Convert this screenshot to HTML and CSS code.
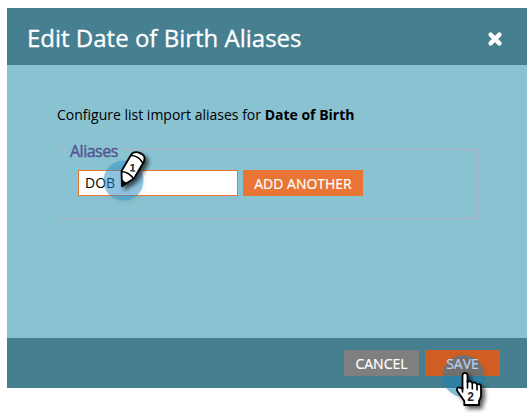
FILE: index.html
```html
<!DOCTYPE html>
<html lang="en">
<head>
<meta charset="utf-8">
<title>Edit Date of Birth Aliases</title>
<link rel="stylesheet" href="styles.css">
</head>
<body>
<div class="dialog">
  <header class="header">
    <h1 class="title">Edit Date of Birth Aliases</h1>
    <svg class="close" width="16" height="16" viewBox="0 0 16 16"><path d="M3.6 3.6L12.4 12.4M12.4 3.6L3.6 12.4"/></svg>
  </header>
  <main class="content">
    <p class="intro">Configure list import aliases for <b>Date of Birth</b></p>
    <fieldset class="group">
      <legend class="legend"><span>Aliases</span></legend>
      <div class="row">
        <div class="field"><span>DOB</span></div>
        <button class="btn add"><span>ADD ANOTHER</span></button>
      </div>
    </fieldset>
  </main>
  <footer class="footer">
    <button class="btn cancel"><span>CANCEL</span></button>
    <button class="btn save"><span>SAVE</span></button>
  </footer>
  <svg class="marker marker-edit" width="60" height="70" viewBox="100 140 60 70">
    <circle class="halo" cx="123.500" cy="180.500" r="20"/>
    <g class="tool">
      <path class="shape" d="M121.500 171L131 155Q133 151.500 138 152.300Q144 154 144.600 158L144 161.500L134 178.500L122 186Z"/>
      <path class="line" d="M131.500 155.500Q139 156 142.800 163M121.800 171.500Q128.500 172 133.500 178.500"/>
      <path class="tip" d="M122 180L126.500 183.500L122 187Z"/>
    </g>
    <text class="digit" x="132.500" y="171.500" transform="rotate(4 132.500 168)">1</text>
  </svg>
  <svg class="marker marker-click" width="70" height="66" viewBox="436 350 70 66">
    <circle class="halo halo-click" cx="463.500" cy="376" r="21"/>
    <g class="tool">
      <path class="shape" d="M462.500 389V375.500Q462.500 372.800 464.900 372.800Q467.500 372.800 467.500 375.500V382.300Q470.500 380.300 472.300 383Q475.500 381.300 477 384.500Q481 383 481 387V396Q480.500 398.500 479 401V405H464.300V401L457 390.500Q456.500 387 459.800 387.500Z"/>
      <path class="line" d="M467.500 381V388M472.300 383V389M477 384.500V390M462.500 387V392"/>
    </g>
    <text class="digit digit-two" x="470.700" y="400.600">2</text>
  </svg>
</div>
</body>
</html>
```
FILE: styles.css
```css
* { box-sizing: border-box; }
body {
  margin: 0;
  padding: 8px 4px 0 7px;
  background: #fff;
  color: #000;
  font-family: "Open Sans", "Noto Sans", sans-serif;
}
.dialog {
  display: flex;
  flex-direction: column;
  width: 520px;
  height: 380px;
  background: #89c2d0;
}
.header {
  display: flex;
  align-items: center;
  justify-content: space-between;
  height: 57px;
  padding: 0 24px 0 20px;
  background: #467f90;
}
.title {
  margin: 0;
  padding-top: 2px;
  color: #fff;
  font-size: 24px;
  font-weight: 400;
  line-height: 34px;
  white-space: nowrap;
  -webkit-text-stroke: 0.3px #fff;
}
.close { margin-top: 5px; }
.close path { fill: none; stroke: #fff; stroke-width: 4.4; stroke-linecap: round; }
.content { flex: 1; padding: 40px 50px 0; }
.intro {
  margin: 0 0 16px;
  font-size: 14px;
  line-height: 20px;
  white-space: nowrap;
}
.group {
  width: 420px;
  height: 78px;
  margin: 0;
  padding: 0 20px;
  border: 1px solid #b4b1c6;
}
.legend {
  height: 16px;
  margin-left: -10px;
  padding: 0 4px 0 2px;
  color: #555390;
  font-size: 16px;
  letter-spacing: -0.5px;
  line-height: 20px;
  -webkit-text-stroke: 0.4px #555390;
}
.row { display: flex; gap: 5px; padding-top: 13px; }
.field {
  width: 160px;
  height: 26px;
  padding: 0 6px;
  border: 1px solid #e97735;
  background: #fff;
  font-size: 14px;
  line-height: 24px;
}
.btn {
  height: 26px;
  margin: 0;
  padding: 0;
  border: 0;
  color: #fff;
  font: 14px/26px "Open Sans", "Noto Sans", sans-serif;
  white-space: nowrap;
  -webkit-text-stroke: 0.2px #fff;
}
.btn span { position: relative; top: 1px; }
.add { width: 120px; background: #e87534; }
.footer {
  display: flex;
  justify-content: flex-end;
  gap: 6px;
  height: 50px;
  padding: 12px 27px 0 0;
  background: #467f90;
}
.cancel { width: 75px; background: #7f7f7f; }
.save { width: 75px; background: #d05d22; color: #b8d2ee; -webkit-text-stroke-color: #b8d2ee; }
.save span { z-index: 2; }
.marker { position: absolute; z-index: 1; }
.marker-edit { left: 100px; top: 140px; }
.marker-click { left: 436px; top: 350px; }
.halo { fill: #2f96d4; fill-opacity: 0.5; filter: drop-shadow(1px 2px 2px rgba(0,0,0,.12)); }
.halo-click { fill: #1c88bb; }
.tool { filter: drop-shadow(3px 3px 2px rgba(0,0,0,.65)); }
.shape { fill: #fff; stroke: #000; stroke-width: 1.8; stroke-linejoin: round; }
.line { fill: none; stroke: #000; stroke-width: 1.6; stroke-linecap: round; }
.tip { fill: #000; stroke: #000; }
.digit {
  fill: #222;
  font: bold 11px "Liberation Sans", sans-serif;
  text-anchor: middle;
}
.digit-two { font-size: 12px; }
```
